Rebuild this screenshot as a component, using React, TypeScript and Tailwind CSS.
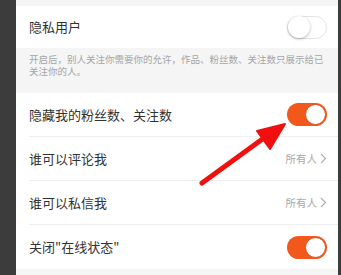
import React from 'react';

const Toggle = ({ on }: { on: boolean }) =>
  on ? (
    <div className="w-[40px] h-[23px] rounded-full bg-[#f2581b] flex items-center justify-end pr-[1px]">
      <div className="w-[21px] h-[21px] rounded-full bg-white border border-[#d8501c]" />
    </div>
  ) : (
    <div className="w-[40px] h-[23px] rounded-full bg-white border border-[#e3e3e3] flex items-center">
      <div className="w-[22px] h-[22px] rounded-full bg-white shadow-[0_1px_3px_rgba(0,0,0,0.3)]" />
    </div>
  );

const Row = ({ label, children, divider }: { label: string; children: React.ReactNode; divider?: boolean }) => (
  <div className="bg-white pl-[13px]">
    <div className={`h-[44px] flex items-center justify-between pr-[11px] ${divider ? 'border-b border-[#eeeeee]' : ''}`}>
      <span className="text-[13px] text-[#333333]">{label}</span>
      {children}
    </div>
  </div>
);

const Everyone = () => (
  <div className="flex items-center gap-[3px] text-[10.5px] text-[#a8a8a8]">
    <span>所有人</span>
    <svg width="7" height="11" viewBox="0 0 7 11" fill="none">
      <path d="M1 1l4.5 4.5L1 10" stroke="#b0b0b0" strokeWidth="1.2" />
    </svg>
  </div>
);

export default function App() {
  return (
    <div
      className="relative w-[341px] h-[275px] flex overflow-hidden"
      style={{ fontFamily: '"Noto Sans CJK SC", "Noto Sans", sans-serif' }}
    >
      <div className="w-[16px] bg-[#3c3c3c]" />
      <div className="flex-1 bg-[#f5f5f5] flex flex-col">
        <div className="h-[6px]" />
        <div className="bg-white h-[42px] flex items-center justify-between pl-[13px] pr-[11px]">
          <span className="text-[13px] text-[#333333]">隐私用户</span>
          <Toggle on={false} />
        </div>
        <div className="h-[45px] px-[13px] pt-[6px] text-[9.5px] leading-[11.5px] text-[#a5a5a5]">
          开启后，别人关注你需要你的允许，作品、粉丝数、关注数只展示给已关注你的人。
        </div>
        <Row label="隐藏我的粉丝数、关注数" divider>
          <Toggle on />
        </Row>
        <Row label="谁可以评论我" divider>
          <Everyone />
        </Row>
        <Row label="谁可以私信我" divider>
          <Everyone />
        </Row>
        <Row label={'关闭"在线状态"'}>
          <Toggle on />
        </Row>
      </div>
      <div className="w-[3px] bg-[#3c3c3c]" />

      {/* red arrow */}
      <svg className="absolute left-0 top-0" width="341" height="275" viewBox="0 0 341 275">
        <line x1="202" y1="183" x2="268" y2="135" stroke="#f01010" strokeWidth="5" strokeLinecap="round" />
        <polygon points="285,124 257,131 270,149" fill="#f01010" stroke="#f01010" strokeWidth="2" strokeLinejoin="round" />
      </svg>
    </div>
  );
}
